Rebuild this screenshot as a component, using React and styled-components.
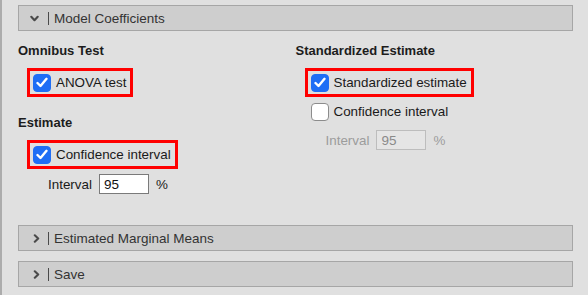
import React from "react";
import styled, { createGlobalStyle } from "styled-components";

const Global = createGlobalStyle`
  html, body { margin: 0; padding: 0; background: #e0e0e0; }
  body { font-family: "Liberation Sans", Arial, sans-serif; }
`;

const Page = styled.div`
  width: 588px;
  height: 295px;
  box-sizing: border-box;
  border-left: 2px solid #acacac;
  background: #e0e0e0;
  padding: 5px 15px 0 16px;
  display: flex;
  flex-direction: column;
  gap: 10px;
  overflow: hidden;
`;

const Section = styled.div`
  display: flex;
  flex-direction: column;
`;

const Header = styled.div`
  height: 26px;
  box-sizing: border-box;
  border: 1px solid #a6a6a6;
  background: #cecece;
  display: flex;
  align-items: center;
  padding-left: ${(p) => (p.$open ? 11 : 13)}px;
  color: #333333;
  font-size: 13.5px;
`;

const Chevron = styled.svg`
  width: 9px;
  height: 9px;
  flex: none;
  margin-right: ${(p) => (p.$open ? 9 : 7)}px;
`;

const Sep = styled.span`
  width: 1px;
  height: 13px;
  background: #4a4a4a;
  margin-right: 5px;
`;

const Content = styled.div`
  display: grid;
  grid-template-columns: 1fr 1fr;
  padding: 12px 0 21px 0;
`;

const Column = styled.div`
  display: flex;
  flex-direction: column;
`;

const Heading = styled.div`
  font-weight: bold;
  font-size: 13px;
  line-height: 16px;
  color: #1c1c1c;
  margin-top: ${(p) => p.$mt || 0}px;
  margin-bottom: 9px;
`;

const OptionRow = styled.label`
  align-self: flex-start;
  margin-left: 9px;
  height: 29px;
  box-sizing: border-box;
  border: 3px solid ${(p) => (p.$hl ? "#ff0000" : "transparent")};
  padding: 0 4px 0 3px;
  display: flex;
  align-items: center;
  font-size: 13.4px;
  color: #1a1a1a;
`;

const Box = styled.span`
  width: 18px;
  height: 18px;
  box-sizing: border-box;
  border-radius: 4px;
  margin-right: 5px;
  display: flex;
  align-items: center;
  justify-content: center;
  background: ${(p) => (p.$checked ? "#1f6ef5" : "#ffffff")};
  border: 1px solid ${(p) => (p.$checked ? "#1f6ef5" : "#8c8c8c")};
`;

const IntervalRow = styled.div`
  display: flex;
  align-items: center;
  margin-top: ${(p) => p.$mt}px;
  padding-left: 30px;
  font-size: 13.4px;
  color: ${(p) => (p.$disabled ? "#9c9c9c" : "#1a1a1a")};
  gap: 7px;
`;

const Input = styled.div`
  width: 50px;
  height: 20px;
  box-sizing: border-box;
  border: 1px solid ${(p) => (p.$disabled ? "#bdbdbd" : "#7a7a7a")};
  background: ${(p) => (p.$disabled ? "#e5e5e5" : "#ffffff")};
  color: ${(p) => (p.$disabled ? "#8a8a8a" : "#111")};
  font-size: 13.5px;
  padding-left: 4px;
  display: flex;
  align-items: center;
`;

const Check = () => (
  <svg width="12" height="11" viewBox="0 0 12 11">
    <path d="M1.5 6 L4.5 9 L10.5 1.8" fill="none" stroke="#fff" strokeWidth="2.4" strokeLinecap="round" strokeLinejoin="round" />
  </svg>
);

const Option = ({ checked, hl, children }) => (
  <OptionRow $hl={hl}>
    <Box $checked={checked}>{checked && <Check />}</Box>
    {children}
  </OptionRow>
);

const SectionHeader = ({ open, title }) => (
  <Header $open={open}>
    <Chevron $open={open} viewBox="0 0 9 9">
      {open ? (
        <path d="M1.3 2.8 L4.5 6.2 L7.7 2.8" fill="none" stroke="#4a4a4a" strokeWidth="2.1" strokeLinecap="round" strokeLinejoin="round" />
      ) : (
        <path d="M2.8 1.3 L6.2 4.5 L2.8 7.7" fill="none" stroke="#4a4a4a" strokeWidth="2.1" strokeLinecap="round" strokeLinejoin="round" />
      )}
    </Chevron>
    <Sep />
    {title}
  </Header>
);

const Interval = ({ disabled, mt }) => (
  <IntervalRow $disabled={disabled} $mt={mt}>
    <span>Interval</span>
    <Input $disabled={disabled}>95</Input>
    <span>%</span>
  </IntervalRow>
);

export default function App() {
  return (
    <>
      <Global />
      <Page>
        <Section>
          <SectionHeader open title="Model Coefficients" />
          <Content>
            <Column>
              <Heading>Omnibus Test</Heading>
              <Option checked hl>ANOVA test</Option>
              <Heading $mt={18}>Estimate</Heading>
              <Option checked hl>Confidence interval</Option>
              <Interval mt={5} />
            </Column>
            <Column>
              <Heading>Standardized Estimate</Heading>
              <Option checked hl>Standardized estimate</Option>
              <Option>Confidence interval</Option>
              <Interval disabled mt={4} />
            </Column>
          </Content>
        </Section>
        <Section>
          <SectionHeader title="Estimated Marginal Means" />
        </Section>
        <Section>
          <SectionHeader title="Save" />
        </Section>
      </Page>
    </>
  );
}
